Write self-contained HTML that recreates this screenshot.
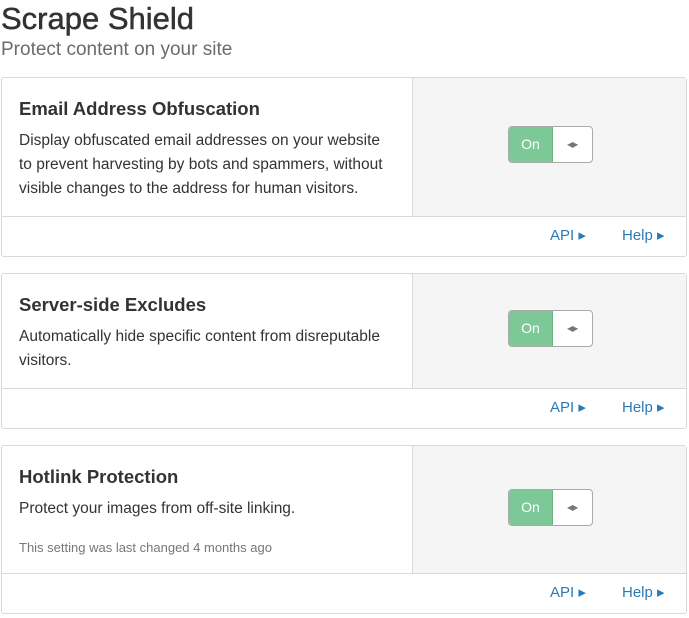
<!DOCTYPE html>
<html><head><style>
*{box-sizing:border-box;margin:0;padding:0}
body{width:689px;height:618px;background:#fff;font-family:"Liberation Sans",sans-serif;color:#333;position:relative;overflow:hidden}
h1{position:absolute;left:1px;top:0;font-size:31px;font-weight:normal;line-height:38px;color:#333;-webkit-text-stroke:.5px #333}
.sub{position:absolute;left:1px;top:38px;font-size:19px;color:#6b6b6b;line-height:24px}
.card{position:absolute;left:1px;width:686px;border:1px solid #d9d9d9;border-radius:3px;background:#fff}
.main{position:absolute;left:0;top:0;right:0;border-bottom:1px solid #d9d9d9}
.side{position:absolute;left:410px;top:0;right:0;bottom:0;background:#f5f5f5;border-left:1px solid #d9d9d9}
.t{position:absolute;left:17px;font-size:18.5px;font-weight:bold;color:#333}
.d{position:absolute;left:17px;width:372px;font-size:15.5px;line-height:24px;color:#333}
.note{position:absolute;left:17px;font-size:13px;color:#777}
.tog{position:absolute;left:95px;width:85px;height:37px;border:1px solid #aaa;border-radius:4px;background:#fff;overflow:hidden}
.tog .on{position:absolute;left:0;top:0;width:44px;height:100%;background:#7cc896;color:#fff;font-size:14px;line-height:35px;text-align:center;border-right:1px solid #6ab584}
.tog .h{position:absolute;left:58px;top:13px;font-size:8px;color:#777;letter-spacing:-1px}
.links{position:absolute;right:0;bottom:0;left:0;height:41px}
.links span{position:absolute;top:11px;font-size:15px;color:#2a7ab8}
</style></head><body>
<h1>Scrape Shield</h1>
<div class="sub">Protect content on your site</div>

<div class="card" style="top:77px;height:180px">
 <div class="main" style="height:139px">
  <div class="t" style="top:20px">Email Address Obfuscation</div>
  <div class="d" style="top:51px">Display obfuscated email addresses on your website to prevent harvesting by bots and spammers, without visible changes to the address for human visitors.</div>
  <div class="side"><div class="tog" style="top:48px"><div class="on">On</div><div class="h">◀▶</div></div></div>
 </div>
 <div class="links"><span style="left:548px">API ▸</span><span style="left:620px">Help ▸</span></div>
</div>

<div class="card" style="top:273px;height:156px">
 <div class="main" style="height:115px">
  <div class="t" style="top:20px">Server-side Excludes</div>
  <div class="d" style="top:51px">Automatically hide specific content from disreputable visitors.</div>
  <div class="side"><div class="tog" style="top:36px"><div class="on">On</div><div class="h">◀▶</div></div></div>
 </div>
 <div class="links"><span style="left:548px">API ▸</span><span style="left:620px">Help ▸</span></div>
</div>

<div class="card" style="top:445px;height:169px">
 <div class="main" style="height:128px">
  <div class="t" style="top:20px">Hotlink Protection</div>
  <div class="d" style="top:51px">Protect your images from off-site linking.</div>
  <div class="note" style="top:94px">This setting was last changed 4 months ago</div>
  <div class="side"><div class="tog" style="top:43px"><div class="on">On</div><div class="h">◀▶</div></div></div>
 </div>
 <div class="links"><span style="left:548px">API ▸</span><span style="left:620px">Help ▸</span></div>
</div>
</body></html>
